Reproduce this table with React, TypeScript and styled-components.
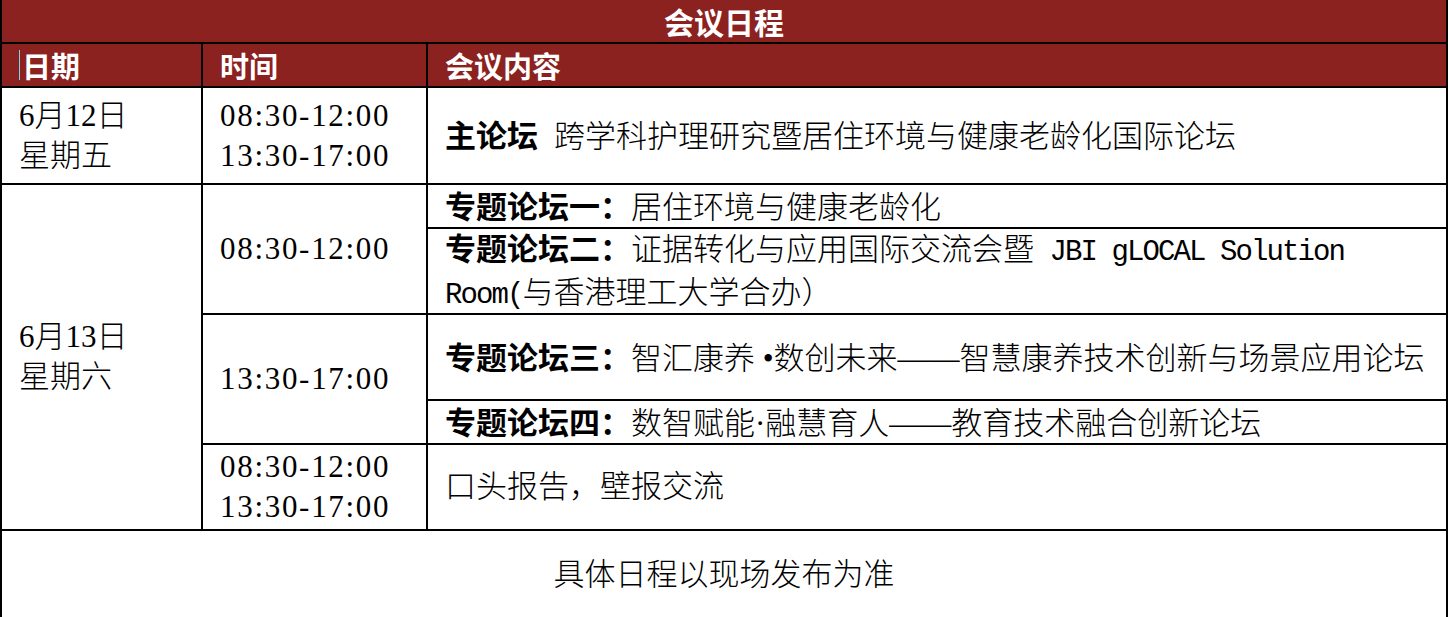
import React from "react";
import styled, { createGlobalStyle } from "styled-components";

const GlobalStyle = createGlobalStyle`
  html, body {
    margin: 0;
    padding: 0;
    background: #fff;
  }
  body {
    font-family: "Liberation Serif", "Noto Sans CJK SC", serif;
    color: #000;
  }
`;

const RED = "#8b2220";

const Table = styled.div`
  display: grid;
  grid-template-columns: 199px 223px 1fr;
  grid-template-rows: 42px 42px 95px 42px 84px 84px 42px 84px 88px;
  gap: 2px;
  width: 1448px;
  padding: 0 2px 2px;
  box-sizing: border-box;
  background: #000;
`;

const Title = styled.div`
  grid-column: 1 / -1;
  display: flex;
  align-items: center;
  justify-content: center;
  background: ${RED};
  color: #fff;
  font-family: "Noto Sans CJK SC", sans-serif;
  font-weight: 700;
  font-size: 30px;
  line-height: 1;
`;

const Cell = styled.div<{ $col: string; $row: string }>`
  grid-column: ${(p) => p.$col};
  grid-row: ${(p) => p.$row};
  display: flex;
  flex-direction: column;
  justify-content: center;
  padding-left: 17px;
  background: #fff;
  font-size: 31px;
  font-weight: 300;
  line-height: 40px;
  white-space: nowrap;
`;

const HeadCell = styled(Cell)`
  flex-direction: row;
  align-items: center;
  justify-content: flex-start;
  background: ${RED};
  color: #fff;
  font-family: "Noto Sans CJK SC", sans-serif;
  font-weight: 700;
  font-size: 29px;
`;

const FootCell = styled(Cell)`
  align-items: center;
  padding-left: 0;
`;

const Caret = styled.span`
  display: inline-block;
  width: 1px;
  height: 30px;
  margin-right: 2px;
  background: #7fd3e6;
`;

const Line = styled.div``;

const Time = styled.div`
  letter-spacing: 1.7px;
`;

const Label = styled.span<{ $space?: boolean }>`
  font-family: "Noto Sans CJK SC", sans-serif;
  font-weight: 700;
  margin-right: ${(p) => (p.$space ? "16px" : "0")};
`;

const Latin = styled.span`
  font-family: "Liberation Mono", monospace;
  font-size: 29px;
  letter-spacing: -1.9px;
`;

const App: React.FC = () => {
  return (
    <>
      <GlobalStyle />
      <Table>
        <Title>会议日程</Title>

        <HeadCell $col="1" $row="2">
          <Caret />
          日期
        </HeadCell>
        <HeadCell $col="2" $row="2">时间</HeadCell>
        <HeadCell $col="3" $row="2">会议内容</HeadCell>

        <Cell $col="1" $row="3">
          <Line>6月12日</Line>
          <Line>星期五</Line>
        </Cell>
        <Cell $col="2" $row="3">
          <Time>08:30-12:00</Time>
          <Time>13:30-17:00</Time>
        </Cell>
        <Cell $col="3" $row="3">
          <Line>
            <Label $space>主论坛</Label>跨学科护理研究暨居住环境与健康老龄化国际论坛
          </Line>
        </Cell>

        <Cell $col="1" $row="4 / span 5">
          <Line>6月13日</Line>
          <Line>星期六</Line>
        </Cell>

        <Cell $col="2" $row="4 / span 2">
          <Time>08:30-12:00</Time>
        </Cell>
        <Cell $col="3" $row="4">
          <Line>
            <Label>专题论坛一：</Label>居住环境与健康老龄化
          </Line>
        </Cell>
        <Cell $col="3" $row="5">
          <Line>
            <Label>专题论坛二：</Label>证据转化与应用国际交流会暨
            <Latin> JBI gLOCAL Solution</Latin>
          </Line>
          <Line>
            <Latin>Room(</Latin>与香港理工大学合办）
          </Line>
        </Cell>

        <Cell $col="2" $row="6 / span 2">
          <Time>13:30-17:00</Time>
        </Cell>
        <Cell $col="3" $row="6">
          <Line>
            <Label>专题论坛三：</Label>智汇康养 •数创未来——智慧康养技术创新与场景应用论坛
          </Line>
        </Cell>
        <Cell $col="3" $row="7">
          <Line>
            <Label>专题论坛四：</Label>数智赋能·融慧育人——教育技术融合创新论坛
          </Line>
        </Cell>

        <Cell $col="2" $row="8">
          <Time>08:30-12:00</Time>
          <Time>13:30-17:00</Time>
        </Cell>
        <Cell $col="3" $row="8">
          <Line>口头报告，壁报交流</Line>
        </Cell>

        <FootCell $col="1 / -1" $row="9">
          <Line>具体日程以现场发布为准</Line>
        </FootCell>
      </Table>
    </>
  );
};

export default App;
